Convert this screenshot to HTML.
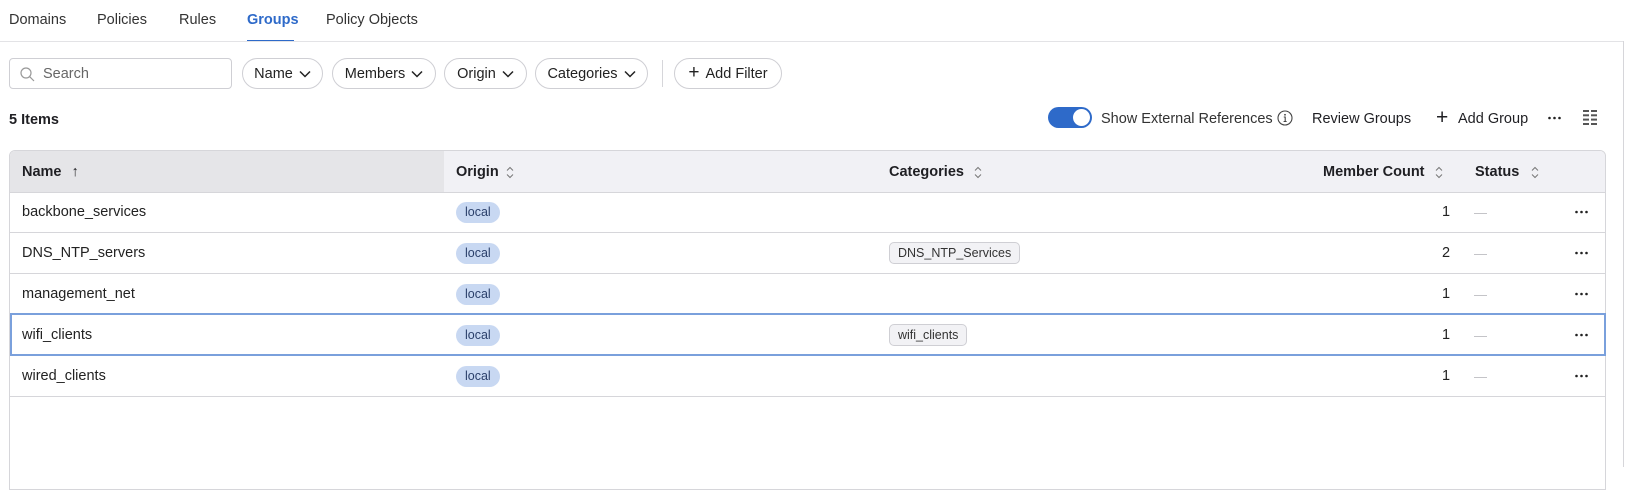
<!DOCTYPE html>
<html><head><meta charset="utf-8"><style>
*{box-sizing:border-box;margin:0;padding:0}
body{width:1639px;height:467px;overflow:hidden;background:#fff;font-family:"Liberation Sans",sans-serif;color:#1f1f23;font-size:14.5px;position:relative}
.a{position:absolute;white-space:nowrap}
.tab{top:12px;font-size:14.5px;color:#333}
.pill{top:58px;height:31px;border:1px solid #cfcfd4;border-radius:16px;display:flex;align-items:center;justify-content:center;gap:6px;font-size:14.5px;color:#222}
.chev{width:12px;height:8px}
.hd{top:152px;height:41px;font-weight:bold;font-size:14.5px;line-height:41px}
.cell{font-size:14.5px;color:#222}
.badge{height:21px;border-radius:11px;background:#c8d8f2;color:#2a3f6a;font-size:12.5px;line-height:21px;padding:0 9px}
.cat{height:22px;border:1px solid #cfcfd4;border-radius:5px;background:#f2f2f5;font-size:12.5px;line-height:20px;padding:0 8px;color:#333}
.hl{left:10px;width:1595px;height:1px;background:#d6d6da}
.dash{width:13px;height:1px;background:#c4c4c8}
</style></head><body>
<div class="a tab" style="left:9px">Domains</div>
<div class="a tab" style="left:97px">Policies</div>
<div class="a tab" style="left:179px">Rules</div>
<div class="a tab" style="left:247px;color:#2e6ac9;font-weight:bold">Groups</div>
<div class="a tab" style="left:326px">Policy Objects</div>
<div class="a" style="left:247px;top:40px;width:47px;height:2px;background:#2e6ac9"></div>
<div class="a" style="left:0;top:41px;width:1624px;height:1px;background:#e3e3e6"></div>
<div class="a" style="left:1623px;top:41px;width:1px;height:426px;background:#d6d6da"></div>

<div class="a" style="left:9px;top:58px;width:223px;height:31px;border:1px solid #cfcfd4;border-radius:4px"></div>
<svg class="a" style="left:20px;top:67px" width="15" height="15" viewBox="0 0 15 15"><circle cx="6" cy="6" r="5" fill="none" stroke="#999" stroke-width="1.2"/><path d="M9.7 9.7L14 14" stroke="#999" stroke-width="1.2"/></svg>
<div class="a" style="left:43px;top:66px;color:#666">Search</div>
<div class="a pill" style="left:242px;width:81px">Name<svg class="chev" viewBox="0 0 12 8"><path d="M1 1.5l5 5 5-5" fill="none" stroke="#222" stroke-width="1.5"/></svg></div>
<div class="a pill" style="left:332px;width:104px">Members<svg class="chev" viewBox="0 0 12 8"><path d="M1 1.5l5 5 5-5" fill="none" stroke="#222" stroke-width="1.5"/></svg></div>
<div class="a pill" style="left:444px;width:83px">Origin<svg class="chev" viewBox="0 0 12 8"><path d="M1 1.5l5 5 5-5" fill="none" stroke="#222" stroke-width="1.5"/></svg></div>
<div class="a pill" style="left:535px;width:113px">Categories<svg class="chev" viewBox="0 0 12 8"><path d="M1 1.5l5 5 5-5" fill="none" stroke="#222" stroke-width="1.5"/></svg></div>
<div class="a" style="left:662px;top:60px;width:1px;height:27px;background:#d6d6da"></div>
<div class="a pill" style="left:674px;width:108px"><span style="font-size:19px;font-weight:300;margin-top:-2px">+</span>Add Filter</div>

<div class="a" style="left:9px;top:112px;font-weight:bold">5 Items</div>
<div class="a" style="left:1048px;top:107px;width:44px;height:21px;border-radius:11px;background:#2e6ac9"></div>
<div class="a" style="left:1073px;top:109px;width:17px;height:17px;border-radius:50%;background:#fff"></div>
<div class="a" style="left:1101px;top:111px;color:#333">Show External References</div>
<svg class="a" style="left:1277px;top:110px" width="16" height="16" viewBox="0 0 16 16"><circle cx="8" cy="8" r="7" fill="none" stroke="#444" stroke-width="1.1"/><circle cx="8" cy="4.8" r="0.9" fill="#444"/><path d="M6.8 7h1.4v4.5M6.6 11.5h3" fill="none" stroke="#444" stroke-width="1.1"/></svg>
<div class="a" style="left:1312px;top:111px">Review Groups</div>
<div class="a" style="left:1436px;top:106px;font-size:21px;font-weight:300">+</div>
<div class="a" style="left:1458px;top:111px">Add Group</div>
<svg class="a" style="left:1548px;top:116px" width="13" height="4" viewBox="0 0 13 4" fill="#222"><circle cx="1.5" cy="2" r="1.3"/><circle cx="6.5" cy="2" r="1.3"/><circle cx="11.5" cy="2" r="1.3"/></svg>
<svg class="a" style="left:1583px;top:110px" width="15" height="15" viewBox="0 0 15 15" fill="#555"><rect x="0" y="0" width="6" height="2"/><rect x="8" y="0" width="6" height="2"/><rect x="0" y="4.3" width="6" height="2"/><rect x="8" y="4.3" width="6" height="2"/><rect x="0" y="8.6" width="6" height="2"/><rect x="8" y="8.6" width="6" height="2"/><rect x="0" y="13" width="6" height="2"/><rect x="8" y="13" width="6" height="2"/></svg>

<div class="a" style="left:9px;top:150px;width:1597px;height:340px;border:1px solid #d6d6da;border-radius:6px 6px 0 0;overflow:hidden">
 <div style="position:absolute;left:0;top:0;width:1597px;height:41px;background:#f1f1f5"></div>
 <div style="position:absolute;left:0;top:0;width:434px;height:41px;background:#e5e5e8"></div>
</div>
<div class="a hd" style="left:22px">Name <span style="font-weight:normal;margin-left:6px">↑</span></div>
<div class="a hd" style="left:456px">Origin</div>
<div class="a hd" style="left:889px">Categories</div>
<div class="a hd" style="left:1323px">Member Count</div>
<div class="a hd" style="left:1475px">Status</div>
<svg class="a" style="left:506px;top:166px" width="8" height="13" viewBox="0 0 8 13"><path d="M1 4.5l3-3 3 3M1 8.5l3 3 3-3" fill="none" stroke="#777" stroke-width="1"/></svg>
<svg class="a" style="left:974px;top:166px" width="8" height="13" viewBox="0 0 8 13"><path d="M1 4.5l3-3 3 3M1 8.5l3 3 3-3" fill="none" stroke="#777" stroke-width="1"/></svg>
<svg class="a" style="left:1435px;top:166px" width="8" height="13" viewBox="0 0 8 13"><path d="M1 4.5l3-3 3 3M1 8.5l3 3 3-3" fill="none" stroke="#777" stroke-width="1"/></svg>
<svg class="a" style="left:1531px;top:166px" width="8" height="13" viewBox="0 0 8 13"><path d="M1 4.5l3-3 3 3M1 8.5l3 3 3-3" fill="none" stroke="#777" stroke-width="1"/></svg>

<div class="a hl" style="top:192px"></div>
<div class="a hl" style="top:232px"></div>
<div class="a hl" style="top:273px"></div>
<div class="a hl" style="top:355px"></div>
<div class="a hl" style="top:396px"></div>
<div class="a" style="left:10px;top:313px;width:1596px;height:43px;border:2px solid #7aa0dc"></div>

<div class="a cell" style="left:22px;top:204px">backbone_services</div>
<div class="a cell" style="left:22px;top:245px">DNS_NTP_servers</div>
<div class="a cell" style="left:22px;top:286px">management_net</div>
<div class="a cell" style="left:22px;top:327px">wifi_clients</div>
<div class="a cell" style="left:22px;top:368px">wired_clients</div>

<div class="a badge" style="left:456px;top:202px">local</div>
<div class="a badge" style="left:456px;top:243px">local</div>
<div class="a badge" style="left:456px;top:284px">local</div>
<div class="a badge" style="left:456px;top:325px">local</div>
<div class="a badge" style="left:456px;top:366px">local</div>

<div class="a cat" style="left:889px;top:242px">DNS_NTP_Services</div>
<div class="a cat" style="left:889px;top:324px">wifi_clients</div>

<div class="a cell" style="left:1442px;top:204px">1</div>
<div class="a cell" style="left:1442px;top:245px">2</div>
<div class="a cell" style="left:1442px;top:286px">1</div>
<div class="a cell" style="left:1442px;top:327px">1</div>
<div class="a cell" style="left:1442px;top:368px">1</div>

<div class="a dash" style="left:1474px;top:213px"></div>
<div class="a dash" style="left:1474px;top:254px"></div>
<div class="a dash" style="left:1474px;top:295px"></div>
<div class="a dash" style="left:1474px;top:336px"></div>
<div class="a dash" style="left:1474px;top:377px"></div>

<svg class="a" style="left:1575px;top:210px" width="13" height="4" viewBox="0 0 13 4" fill="#222"><circle cx="1.5" cy="2" r="1.3"/><circle cx="6.5" cy="2" r="1.3"/><circle cx="11.5" cy="2" r="1.3"/></svg>
<svg class="a" style="left:1575px;top:251px" width="13" height="4" viewBox="0 0 13 4" fill="#222"><circle cx="1.5" cy="2" r="1.3"/><circle cx="6.5" cy="2" r="1.3"/><circle cx="11.5" cy="2" r="1.3"/></svg>
<svg class="a" style="left:1575px;top:292px" width="13" height="4" viewBox="0 0 13 4" fill="#222"><circle cx="1.5" cy="2" r="1.3"/><circle cx="6.5" cy="2" r="1.3"/><circle cx="11.5" cy="2" r="1.3"/></svg>
<svg class="a" style="left:1575px;top:333px" width="13" height="4" viewBox="0 0 13 4" fill="#222"><circle cx="1.5" cy="2" r="1.3"/><circle cx="6.5" cy="2" r="1.3"/><circle cx="11.5" cy="2" r="1.3"/></svg>
<svg class="a" style="left:1575px;top:374px" width="13" height="4" viewBox="0 0 13 4" fill="#222"><circle cx="1.5" cy="2" r="1.3"/><circle cx="6.5" cy="2" r="1.3"/><circle cx="11.5" cy="2" r="1.3"/></svg>
</body></html>
